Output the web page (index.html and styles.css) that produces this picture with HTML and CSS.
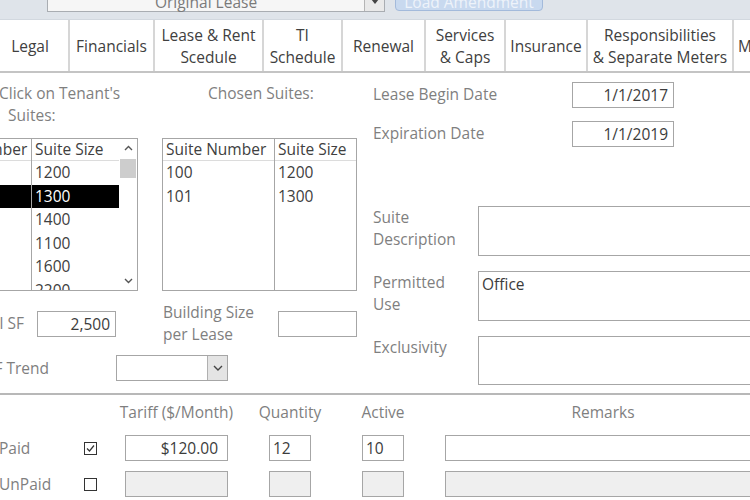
FILE: index.html
```html
<!DOCTYPE html>
<html>
<head>
<meta charset="utf-8">
<title>Lease Form</title>
<link rel="stylesheet" href="styles.css">
</head>
<body>
<div class="topbar">
  <div class="combo-top">
    <span class="combo-top-text">Original Lease</span>
    <span class="combo-top-btn"><svg width="8" height="5" viewBox="0 0 8 5"><path d="M0 0 L8 0 L4 5 Z" fill="#444"/></svg></span>
  </div>
  <div class="load-btn">Load Amendment</div>
</div>

<div class="tabs">
  <div class="tab tab-legal">Legal</div>
  <div class="tab tab-fin">Financials</div>
  <div class="tab tab-lease">Lease &amp; Rent<br>Scedule</div>
  <div class="tab tab-ti">TI<br>Schedule</div>
  <div class="tab tab-ren">Renewal</div>
  <div class="tab tab-svc">Services<br>&amp; Caps</div>
  <div class="tab tab-ins">Insurance</div>
  <div class="tab tab-resp">Responsibilities<br>&amp; Separate Meters</div>
  <div class="tab tab-m">Miscellaneous</div>
</div>

<div class="main">
  <div class="left">
    <div class="l-labels">
      <div class="tenant-label"><div>Click on Tenant's</div><div class="indent">Suites:</div></div>
      <div class="chosen-label">Chosen Suites:</div>
    </div>

    <div class="lists">
      <div class="listbox lb-tenant">
        <div class="lb-col lb-c1">
          <div class="lb-head">Suite Number</div>
          <div class="lb-cell">100</div>
          <div class="lb-cell sel">101</div>
          <div class="lb-cell">102</div>
          <div class="lb-cell">103</div>
          <div class="lb-cell">104</div>
          <div class="lb-cell">105</div>
        </div>
        <div class="lb-col lb-c2">
          <div class="lb-head">Suite Size</div>
          <div class="lb-cell">1200</div>
          <div class="lb-cell sel">1300</div>
          <div class="lb-cell">1400</div>
          <div class="lb-cell">1100</div>
          <div class="lb-cell">1600</div>
          <div class="lb-cell">2200</div>
        </div>
        <div class="scrollbar">
          <div class="sb-btn"><svg width="9" height="6" viewBox="0 0 9 6"><path d="M1 5 L4.5 1.5 L8 5" fill="none" stroke="#555" stroke-width="1.4"/></svg></div>
          <div class="sb-thumb"></div>
          <div class="sb-track"></div>
          <div class="sb-btn"><svg width="9" height="6" viewBox="0 0 9 6"><path d="M1 1 L4.5 4.5 L8 1" fill="none" stroke="#555" stroke-width="1.4"/></svg></div>
        </div>
      </div>

      <div class="listbox lb-chosen">
        <div class="lb-col lb-c1">
          <div class="lb-head">Suite Number</div>
          <div class="lb-cell">100</div>
          <div class="lb-cell">101</div>
        </div>
        <div class="lb-col lb-c2">
          <div class="lb-head">Suite Size</div>
          <div class="lb-cell">1200</div>
          <div class="lb-cell">1300</div>
        </div>
      </div>
    </div>

    <div class="row-sf">
      <div class="field-a">
        <span class="lbl lbl-sf">Total SF</span>
        <div class="box num sf-box">2,500</div>
      </div>
      <div class="field-b">
        <div class="lbl lbl-bsize">Building Size<br>per Lease</div>
        <div class="box bsize-box"></div>
      </div>
    </div>

    <div class="row-trend">
      <span class="lbl lbl-trend">SF Trend</span>
      <div class="combo">
        <div class="combo-val"></div>
        <div class="combo-btn"><svg width="10" height="6" viewBox="0 0 10 6"><path d="M1 1 L5 5 L9 1" fill="none" stroke="#444" stroke-width="1.4"/></svg></div>
      </div>
    </div>
  </div>

  <div class="right">
    <div class="r-date r-date1">
      <span class="lbl r-date-lbl">Lease Begin Date</span>
      <div class="box num date-box">1/1/2017</div>
    </div>
    <div class="r-date r-date2">
      <span class="lbl r-date-lbl">Expiration Date</span>
      <div class="box num date-box">1/1/2019</div>
    </div>
    <div class="r-area r-area1">
      <div class="lbl r-area-lbl">Suite<br>Description</div>
      <div class="box area-box"></div>
    </div>
    <div class="r-area r-area2">
      <div class="lbl r-area-lbl">Permitted<br>Use</div>
      <div class="box area-box">Office</div>
    </div>
    <div class="r-area r-area3">
      <div class="lbl r-area-lbl">Exclusivity</div>
      <div class="box area-box area-short"></div>
    </div>
  </div>
</div>

<div class="divider"></div>

<div class="charges">
  <div></div>
  <div></div>
  <div class="ch ch-tariff">Tariff ($/Month)</div>
  <div class="ch ch-qty">Quantity</div>
  <div class="ch ch-act">Active</div>
  <div class="ch ch-rem">Remarks</div>

  <div class="lbl c-lbl">Paid</div>
  <div class="c-check"><svg width="13" height="13" viewBox="0 0 13 13"><rect x="0.5" y="0.5" width="12" height="12" fill="#fff" stroke="#333"/><path d="M3 6.5 L5.5 9 L10 3.5" fill="none" stroke="#333" stroke-width="1.2"/></svg></div>
  <div class="box num tariff-box">$120.00</div>
  <div class="box qty-box">12</div>
  <div class="box qty-box">10</div>
  <div class="box rem-box"></div>

  <div class="lbl c-lbl">UnPaid</div>
  <div class="c-check"><svg width="13" height="13" viewBox="0 0 13 13"><rect x="0.5" y="0.5" width="12" height="12" fill="#fff" stroke="#333"/></svg></div>
  <div class="box off tariff-box"></div>
  <div class="box off qty-box"></div>
  <div class="box off qty-box"></div>
  <div class="box off rem-box"></div>
</div>
</body>
</html>
```

FILE: styles.css
```css
* { box-sizing: border-box; }
html, body { margin: 0; padding: 0; }
body {
  width: 750px;
  height: 500px;
  overflow: hidden;
  background: #fff;
  font-family: "Open Sans", "Noto Sans", sans-serif;
  font-size: 15.5px;
  color: #7f7f7f;
}

/* top bar */
.topbar {
  height: 20px;
  background: #dfe4ea;
  display: flex;
  padding-left: 47px;
  border-bottom: 1px solid #d2d8df;
}
.combo-top {
  width: 338px;
  height: 26px;
  margin-top: -14px;
  background: #f6f6f6;
  border: 1px solid #a9adb2;
  display: flex;
}
.combo-top-text {
  flex: 1;
  text-align: center;
  color: #7a7a7a;
  font-size: 15.5px;
  line-height: 30px;
}
.combo-top-btn {
  width: 20px;
  border-left: 1px solid #b5b5b5;
  background: #e9e9e9;
  display: flex;
  align-items: flex-end;
  justify-content: center;
  padding-bottom: 7px;
}
.load-btn {
  width: 148px;
  height: 25px;
  margin-top: -14px;
  margin-left: 10px;
  background: #c8d9ef;
  border: 1px solid #a3badb;
  border-radius: 4px;
  color: #eef3fa;
  font-size: 15.5px;
  text-align: center;
  line-height: 30px;
  white-space: nowrap;
}

/* tabs */
.tabs {
  display: flex;
  gap: 2px;
  height: 53px;
  background: #d6d6d6;
  border-bottom: 2px solid #c4c4c4;
}
.tab {
  flex-shrink: 0;
  background: #fff;
  display: flex;
  align-items: center;
  justify-content: center;
  text-align: center;
  line-height: 22px;
  color: #404040;
  white-space: nowrap;
}
.tab-legal { width: 76px; margin-left: -8px; }
.tab-fin { width: 83px; }
.tab-lease { width: 107px; }
.tab-ti { width: 77px; }
.tab-ren { width: 81px; }
.tab-svc { width: 78px; }
.tab-ins { width: 80px; }
.tab-resp { width: 144px; }
.tab-m { padding: 0 4px; }

/* main */
.main { display: flex; height: 320px; }
.left { flex-shrink: 0; width: 422px; margin-left: -62px; }
.right { flex-shrink: 0; width: 430px; margin-left: 13px; }

.l-labels { display: flex; margin-top: 9px; height: 44px; line-height: 22px; }
.tenant-label { width: 224px; padding-left: 61px; white-space: nowrap; }
.tenant-label .indent { padding-left: 9px; }
.chosen-label { padding-left: 46px; white-space: nowrap; }

.lists { display: flex; gap: 24px; margin-top: 12px; height: 153px; }
.listbox {
  display: flex;
  border: 1px solid #a6a6a6;
  height: 153px;
  overflow: hidden;
  background: #fff;
  color: #404040;
  flex-shrink: 0;
}
.lb-tenant { width: 215px; margin-left: -15px; }
.lb-chosen { width: 195px; }
.lb-col { flex-shrink: 0; white-space: nowrap; overflow: hidden; }
.lb-c1 { border-right: 1px solid #a6a6a6; }
.lb-tenant .lb-c1 { width: 108px; }
.lb-tenant .lb-c2 { width: 87px; }
.lb-chosen .lb-c1 { width: 112px; }
.lb-chosen .lb-c2 { flex: 1; }
.lb-head {
  height: 22px;
  line-height: 21px;
  padding-left: 3px;
  border-bottom: 1px solid #dcdcdc;
}
.lb-cell { height: 23.6px; line-height: 23.6px; padding-left: 3px; }
.lb-cell.sel { background: #000; color: #fff; }

.scrollbar {
  width: 18px;
  display: flex;
  flex-direction: column;
  align-items: center;
  background: #fff;
}
.sb-btn { height: 18px; display: flex; align-items: center; justify-content: center; }
.sb-thumb { width: 16px; height: 19px; margin-top: 2px; background: #cdcdcd; }
.sb-track { flex: 1; }

.box {
  border: 1px solid #a6a6a6;
  height: 26px;
  background: #fff;
  color: #3c3c3c;
  line-height: 24px;
  padding: 0 3px;
  flex-shrink: 0;
  white-space: nowrap;
}
.box.num { text-align: right; padding-right: 5px; }
.box.off { background: #efefef; }

.row-sf { display: flex; gap: 24px; margin-top: 10px; height: 36px; }
.field-a { display: flex; width: 200px; flex-shrink: 0; }
.lbl-sf {
  width: 99px;
  padding-right: 13px;
  text-align: right;
  margin-top: 11px;
  line-height: 22px;
  white-space: nowrap;
  flex-shrink: 0;
}
.sf-box { width: 79px; margin-top: 10px; }
.field-b { display: flex; width: 195px; flex-shrink: 0; }
.lbl-bsize { width: 116px; padding-left: 1px; line-height: 22px; flex-shrink: 0; white-space: nowrap; }
.bsize-box { width: 79px; margin-top: 10px; }

.row-trend { display: flex; align-items: center; margin-top: 18px; height: 26px; }
.lbl-trend {
  width: 178px;
  padding-right: 67px;
  text-align: right;
  flex-shrink: 0;
  white-space: nowrap;
}
.combo {
  width: 112px;
  height: 26px;
  border: 1px solid #a6a6a6;
  display: flex;
  background: #fff;
}
.combo-val { flex: 1; }
.combo-btn {
  width: 20px;
  background: #e4e4e4;
  border-left: 1px solid #b0b0b0;
  display: flex;
  align-items: center;
  justify-content: center;
}

/* right */
.r-date { display: flex; align-items: center; height: 26px; }
.r-date1 { margin-top: 9px; }
.r-date2 { margin-top: 13px; }
.r-date-lbl { width: 199px; flex-shrink: 0; white-space: nowrap; line-height: 22px; margin-top: -2px; }
.date-box { width: 102px; padding-right: 4px; }

.r-area { display: flex; }
.r-area1 { margin-top: 59px; }
.r-area2 { margin-top: 15px; }
.r-area3 { margin-top: 15px; }
.r-area-lbl { width: 105px; flex-shrink: 0; line-height: 22px; white-space: nowrap; }
.area-box { width: 320px; height: 50px; line-height: 22px; padding-top: 1px; }
.area-short { height: 49px; }

.divider { height: 2px; background: #b8b8b8; }

/* charges */
.charges {
  display: grid;
  grid-template-columns: 84px 41px 144px 93px 83px 316px;
  grid-template-rows: 24px 26px 26px;
  row-gap: 10px;
  margin-top: 6px;
  width: 761px;
}
.ch {
  display: flex;
  justify-content: center;
  white-space: nowrap;
  line-height: 22px;
}
.ch-tariff { width: 103px; }
.ch-qty { width: 42px; }
.ch-act { width: 42px; }
.ch-rem { width: 316px; }
.c-lbl { line-height: 26px; margin-left: -1px; }
.c-check { display: flex; align-items: center; }
.tariff-box { width: 103px; }
.box.num.tariff-box { padding-right: 9px; }
.qty-box { width: 42px; }
.rem-box { width: 316px; }
```
